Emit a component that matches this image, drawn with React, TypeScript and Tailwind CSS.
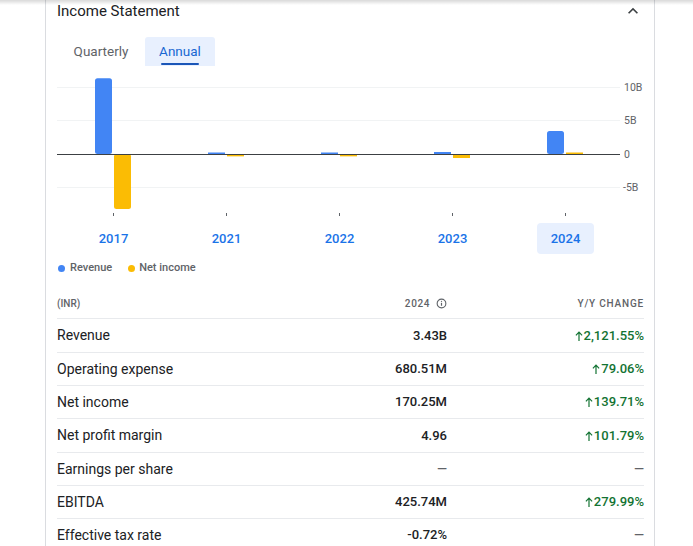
import React from "react";

type Bar = { year: string; revenue: number; netIncome: number };

const bars: Bar[] = [
  { year: "2017", revenue: 11.3, netIncome: -8.2 },
  { year: "2021", revenue: 0.15, netIncome: -0.35 },
  { year: "2022", revenue: 0.15, netIncome: -0.35 },
  { year: "2023", revenue: 0.3, netIncome: -0.6 },
  { year: "2024", revenue: 3.43, netIncome: 0.17 },
];

const rows = [
  { label: "Revenue", value: "3.43B", change: "2,121.55%", h: "h-[34px]" },
  { label: "Operating expense", value: "680.51M", change: "79.06%", h: "h-[33px]" },
  { label: "Net income", value: "170.25M", change: "139.71%", h: "h-[33px]" },
  { label: "Net profit margin", value: "4.96", change: "101.79%", h: "h-[34px]" },
  { label: "Earnings per share", value: "—", change: null, h: "h-[33px]" },
  { label: "EBITDA", value: "425.74M", change: "279.99%", h: "h-[33px]" },
  { label: "Effective tax rate", value: "-0.72%", change: null, h: "h-[33px]" },
];

// 5B == 33.5px, baseline at y=84 in chart coords
const scale = 33.5 / 5;
const baseline = 84;

const Chart = () => (
  <svg width={586} height={150} className="block">
    {[17, 50, 117].map((y) => (
      <line key={y} x1={0} x2={563} y1={y + 0.5} y2={y + 0.5} stroke="#f1f3f4" />
    ))}
    {bars.map((b, i) => {
      const cx = 56 + i * 113;
      const rh = Math.max(Math.abs(b.revenue) * scale, 1.5);
      const nh = Math.max(Math.abs(b.netIncome) * scale, 1.5);
      return (
        <g key={b.year}>
          <rect
            x={cx - 18}
            y={b.revenue >= 0 ? baseline - rh : baseline}
            width={17}
            height={rh}
            rx={rh > 6 ? 2.5 : 0}
            fill="#4285f4"
          />
          <rect
            x={cx + 1}
            y={b.netIncome >= 0 ? baseline - nh : baseline}
            width={17}
            height={nh}
            rx={nh > 6 ? 2.5 : 0}
            fill="#fbbc04"
          />
          <line x1={cx + 0.5} x2={cx + 0.5} y1={143} y2={146} stroke="#5f6368" />
        </g>
      );
    })}
    <line x1={0} x2={563} y1={baseline + 0.5} y2={baseline + 0.5} stroke="#3c4043" />
    {[
      { y: 17, t: "10B" },
      { y: 50, t: "5B" },
      { y: 84, t: "0" },
      { y: 117, t: "-5B" },
    ].map((l) => (
      <text
        key={l.t}
        x={l.t === "-5B" ? 566 : 567}
        y={l.y + 4}
        fontSize={10.5}
        fill="#5f6368"
        fontFamily="Roboto, sans-serif"
      >
        {l.t}
      </text>
    ))}
  </svg>
);

const UpArrow = () => (
  <svg width="8" height="10" viewBox="0 0 8 10" className="mr-[1px] inline-block">
    <path d="M4 1.2v8.8M0.9 4.3L4 1.2l3.1 3.1" stroke="#137333" strokeWidth="1.2" fill="none" />
  </svg>
);

export default function App() {
  return (
    <div className="relative h-[546px] w-[693px] overflow-hidden bg-white font-['Roboto',sans-serif]">
      <div className="absolute inset-x-0 top-0 h-[5px] bg-gradient-to-b from-black/15 to-transparent" />
      <div className="ml-[45px] h-full w-[610px] border-x border-[#dadce0] pl-[11px] pr-[10px]">
        <div className="flex h-[22px] items-center justify-between">
          <h2 className="text-[15px] text-[#202124]">Income Statement</h2>
          <svg width="20" height="20" viewBox="0 0 24 24" className="mr-[1px]">
            <path d="M12 8l-6 6 1.41 1.41L12 10.83l4.59 4.58L18 14z" fill="#3c4043" />
          </svg>
        </div>

        <div className="mt-[15px] flex">
          <button className="flex h-[29px] w-[88px] items-center justify-center text-[13.5px] text-[#5f6368]">
            Quarterly
          </button>
          <button className="relative flex h-[29px] w-[70px] items-center justify-center rounded-t-[3px] bg-[#e8f0fe] text-[13.5px] text-[#1967d2]">
            Annual
            <span className="absolute bottom-[1px] left-[16px] right-[16px] h-[2px] rounded-full bg-[#1a56b8]" />
          </button>
        </div>

        <div className="mt-[4px]">
          <Chart />
        </div>

        <div className="mt-[3px] flex">
          {bars.map((b) => (
            <div key={b.year} className="flex w-[113px] justify-center">
              <div
                className={
                  b.year === "2024"
                    ? "flex h-[31px] w-[57px] items-center justify-center rounded-[4px] bg-[#e8f0fe] text-[13px] font-medium text-[#1a73e8]"
                    : "flex h-[31px] w-[57px] items-center justify-center text-[13px] font-medium text-[#1a73e8]"
                }
              >
                {b.year}
              </div>
            </div>
          ))}
        </div>

        <div className="mt-[7px] flex h-[14px] items-center text-[11px] font-medium text-[#5f6368]">
          <span className="ml-[1px] h-[7px] w-[7px] rounded-full bg-[#4285f4]" />
          <span className="ml-[5px]">Revenue</span>
          <span className="ml-[16px] h-[7px] w-[7px] rounded-full bg-[#fbbc04]" />
          <span className="ml-[4px]">Net income</span>
        </div>

        <div className="mt-[13px] flex h-[30px] items-center text-[10px] font-medium text-[#5f6368]">
          <div className="w-[230px]">(INR)</div>
          <div className="flex w-[160px] items-center justify-end tracking-[0.6px]">
            2024
            <svg width="11" height="11" viewBox="0 0 24 24" className="ml-[6px]">
              <circle cx="12" cy="12" r="9.5" stroke="#5f6368" strokeWidth="2.4" fill="none" />
              <path d="M12 10.5v6.5" stroke="#5f6368" strokeWidth="2.6" />
              <circle cx="12" cy="7.3" r="1.5" fill="#5f6368" />
            </svg>
          </div>
          <div className="flex-1 text-right tracking-[0.8px]">Y/Y CHANGE</div>
        </div>

        {rows.map((r) => (
          <div
            key={r.label}
            className={`flex ${r.h} items-center border-t border-[#e8eaed] text-[#202124]`}
          >
            <div className="w-[230px] text-[14px]">{r.label}</div>
            <div className="w-[160px] text-right text-[13px] font-medium">
              {r.value === "—" ? <span className="text-[#5f6368]">—</span> : r.value}
            </div>
            <div className="flex flex-1 items-center justify-end text-[13px] font-medium">
              {r.change ? (
                <span className="flex items-center text-[#137333]">
                  <UpArrow />
                  {r.change}
                </span>
              ) : (
                <span className="text-[#5f6368]">—</span>
              )}
            </div>
          </div>
        ))}
      </div>
    </div>
  );
}
